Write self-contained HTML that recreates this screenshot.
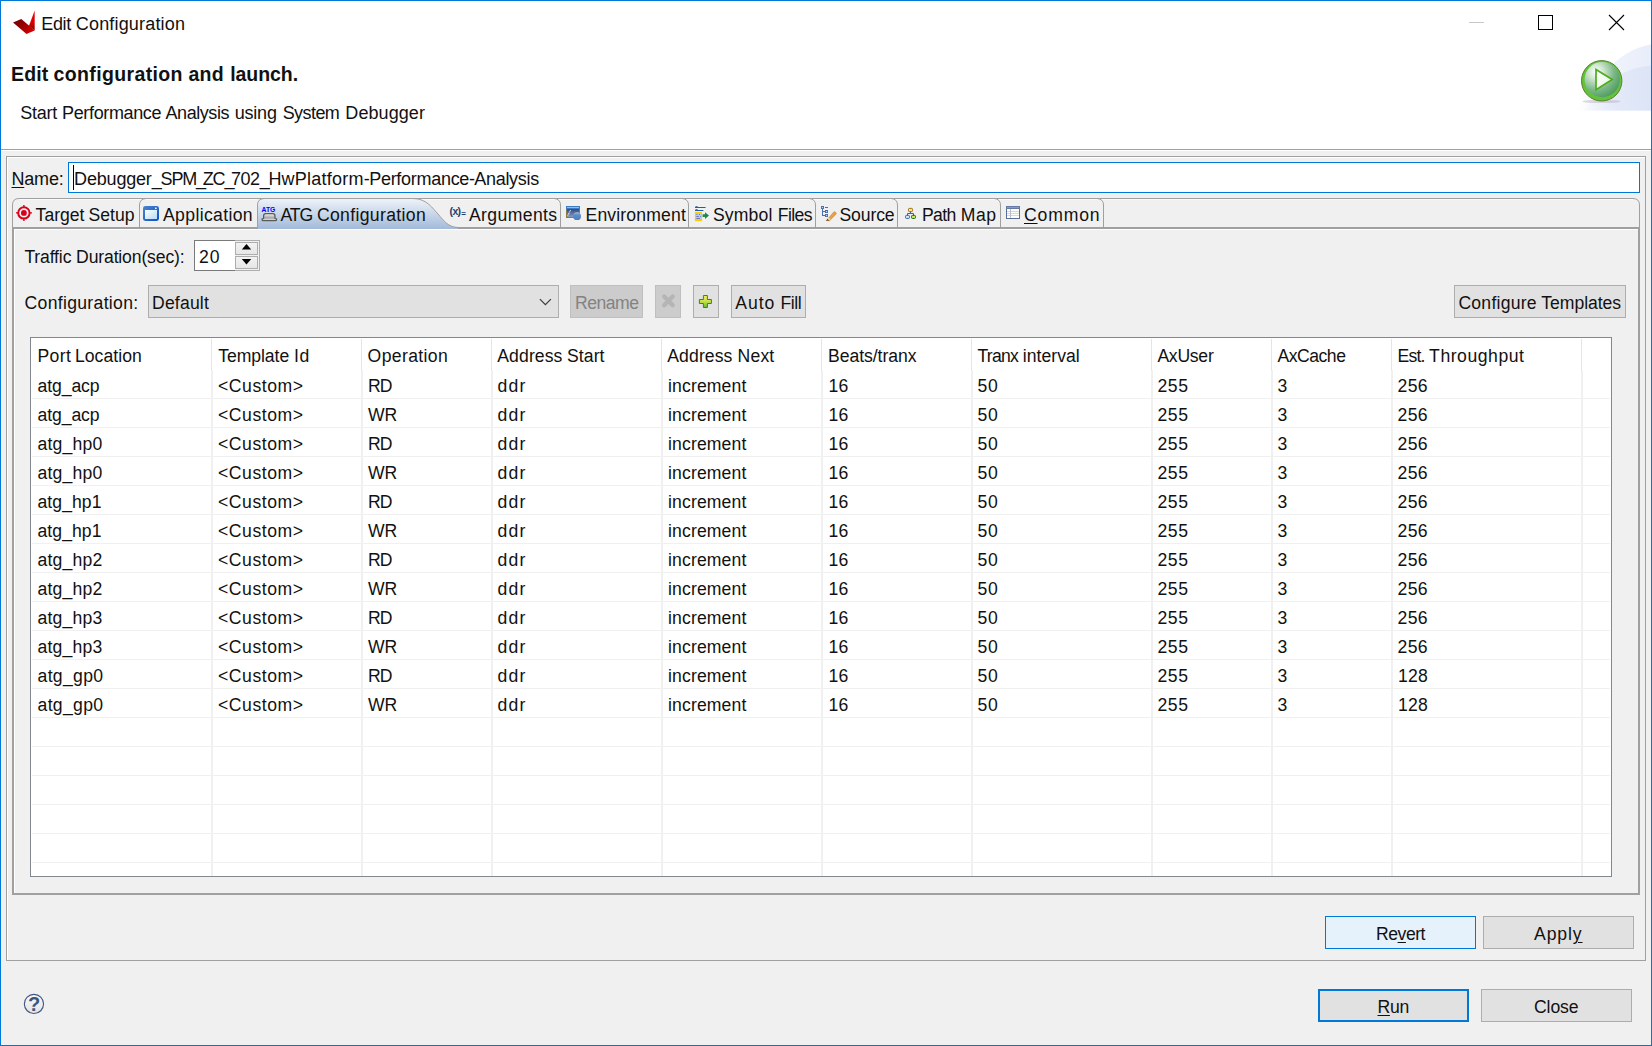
<!DOCTYPE html>
<html><head><meta charset="utf-8"><title>Edit Configuration</title>
<style>
html,body{margin:0;padding:0;}
body{width:1652px;height:1046px;position:relative;overflow:hidden;background:#f0f0f0;font-family:'Liberation Sans',sans-serif;font-size:17.6px;color:#111;}
.a{position:absolute;box-sizing:border-box;}
.t{position:absolute;white-space:pre;line-height:normal;}
u{text-decoration:underline;text-decoration-thickness:1px;text-underline-offset:2px;}
.btn{position:absolute;box-sizing:border-box;background:#e1e1e1;border:1px solid #adadad;}
.vl{position:absolute;width:1px;background:#edf2f9;}
.hl{position:absolute;height:1px;background:#f0f0f0;}
</style></head><body>
<!-- window frame -->
<div class="a" style="left:0;top:0;width:1652px;height:1046px;border:1px solid #0078d7;border-left-width:1px;"></div>
<!-- white header -->
<div class="a" style="left:1px;top:1px;width:1650px;height:148px;background:#fff;"></div>
<div class="a" style="left:1px;top:149px;width:1650px;height:1px;background:#a0a0a0;"></div>
<div class="a" style="left:1px;top:150px;width:1650px;height:1px;background:#fff;"></div>
<svg class="a" style="left:1560px;top:40px" width="91" height="75" viewBox="1560 40 91 75">
<defs>
<linearGradient id="bg1" gradientUnits="userSpaceOnUse" x1="1576" y1="0" x2="1651" y2="0"><stop offset="0" stop-color="#f0f3fc" stop-opacity="0"/><stop offset="0.45" stop-color="#eef2fc" stop-opacity="0.9"/><stop offset="1" stop-color="#e8edfa"/></linearGradient>
<linearGradient id="bg2" gradientUnits="userSpaceOnUse" x1="1580" y1="0" x2="1651" y2="0"><stop offset="0" stop-color="#e6ebf9" stop-opacity="0"/><stop offset="0.5" stop-color="#e2e8f8" stop-opacity="0.9"/><stop offset="1" stop-color="#dce4f6"/></linearGradient>
<radialGradient id="pg" gradientUnits="userSpaceOnUse" cx="1596" cy="72" r="30"><stop offset="0" stop-color="#ffffff"/><stop offset="0.25" stop-color="#cfe6cf"/><stop offset="0.6" stop-color="#7db887"/><stop offset="1" stop-color="#3f9254"/></radialGradient>
<linearGradient id="tri" x1="0" y1="0" x2="1" y2="1"><stop offset="0" stop-color="#fff"/><stop offset="1" stop-color="#e6f3e0"/></linearGradient>
</defs>
<path d="M1651 44.5 C1624 49 1600 70 1577 110.5 L1651 110.5 Z" fill="url(#bg1)"/>
<path d="M1651 66 C1628 67 1606 78 1584 110.5 L1651 110.5 Z" fill="url(#bg2)"/>
<ellipse cx="1601.5" cy="101.5" rx="19" ry="1.6" fill="#b9a9b9" opacity="0.45"/>
<circle cx="1601.7" cy="80.8" r="20.2" fill="#62c23c" stroke="#5f7d2e" stroke-width="1"/>
<circle cx="1602.2" cy="79.6" r="17.6" fill="url(#pg)"/>
<path d="M1596 69.6 L1612.2 79.5 L1596 89.6 Z" fill="url(#tri)" stroke="#4aae1c" stroke-width="1.7" stroke-linejoin="miter"/>
</svg>

<!-- outer group -->
<div class="a" style="left:6px;top:156px;width:1640px;height:805px;border:1px solid #a0a0a0;"></div>
<div class="a" style="left:7px;top:157px;width:1638px;height:803px;border:1px solid #fff;border-right:none;border-bottom:none;"></div>
<!-- name input -->
<div class="a" style="left:68px;top:162px;width:1572px;height:31px;background:#fff;border:1px solid #0078d7;"></div>
<div class="a" style="left:73px;top:165px;width:1px;height:25px;background:#000;"></div>
<!-- tab folder -->
<div class="a" style="left:12px;top:227px;width:1628px;height:668px;border:2px solid #a0a0a0;"></div>
<div class="a" style="left:14px;top:229px;width:1624px;height:664px;border-left:1px solid #fff;border-top:1px solid #fff;"></div>
<svg class="a" style="left:0;top:195px" width="1652" height="34" viewBox="0 195 1652 34">
<defs><linearGradient id="tg" x1="0" y1="0" x2="0" y2="1"><stop offset="0" stop-color="#edf2f9"/><stop offset="0.35" stop-color="#d3dfee"/><stop offset="1" stop-color="#a3bad9"/></linearGradient></defs>
<path d="M258 229 L258 205 Q258 199 264 199 L413 199 C427 199 433 209 438 214 C444 221 448 227 458 227.5 L458 229 Z" fill="url(#tg)"/>
<path d="M19 199.5 L257 199.5 M420 199.5 L1633 199.5" stroke="#fafafa" stroke-width="1" fill="none"/>
<g fill="none" stroke="#a0a0a0" stroke-width="1">
<path d="M12.5 227 L12.5 205 Q12.5 198.5 19 198.5 L1633 198.5 Q1639.5 198.5 1639.5 205 L1639.5 227"/>
<path d="M139.5 227 L139.5 205 Q139.5 199 146 198.5"/>
<path d="M257.5 227 L257.5 205 Q257.5 199 264 198.5"/>
<path d="M413 198.5 C427 198.5 433 209 438 214 C444 221 448 227 458 227.5"/>
<path d="M554 198.5 Q560.5 199 560.5 205 L560.5 227"/>
<path d="M682 198.5 Q688.5 199 688.5 205 L688.5 227"/>
<path d="M809 198.5 Q815.5 199 815.5 205 L815.5 227"/>
<path d="M891 198.5 Q897.5 199 897.5 205 L897.5 227"/>
<path d="M994 198.5 Q1000.5 199 1000.5 205 L1000.5 227"/>
<path d="M1097 198.5 Q1103.5 199 1103.5 205 L1103.5 227"/>
</g>
</svg>

<!-- spinner -->
<div class="a" style="left:194px;top:240px;width:66px;height:31px;background:#f0f0f0;border:1px solid #adadad;"></div>
<div class="a" style="left:194px;top:240px;width:41px;height:31px;background:#fff;border:1px solid #7a7a7a;border-right:none;"></div>
<div class="a" style="left:235px;top:242px;width:23px;height:13px;background:linear-gradient(#f2f2f2,#e6e6e6);border:1px solid #adadad;"></div>
<div class="a" style="left:235px;top:256px;width:23px;height:13px;background:linear-gradient(#f2f2f2,#e6e6e6);border:1px solid #adadad;"></div>
<svg class="a" style="left:241px;top:243px" width="11" height="7"><path d="M0.8 6.6 L5.5 0.9 L10.2 6.6Z" fill="#000"/></svg>
<svg class="a" style="left:241px;top:258px" width="11" height="7"><path d="M0.8 0.9 L5.5 6.4 L10.2 0.9Z" fill="#000"/></svg>
<!-- combo -->
<div class="btn" style="left:148px;top:285px;width:411px;height:33px;"></div>
<svg class="a" style="left:538px;top:297px" width="14" height="9"><path d="M1.9 2.1 L7.4 7.6 L12.9 2.1" fill="none" stroke="#3c3c3c" stroke-width="1.25"/></svg>
<!-- buttons row -->
<div class="btn" style="left:570px;top:285px;width:73px;height:33px;background:#ccc;border-color:#bfbfbf;"></div>
<div class="btn" style="left:655px;top:285px;width:26px;height:33px;background:#ccc;border-color:#bfbfbf;"></div>
<div class="btn" style="left:693px;top:285px;width:26px;height:33px;"></div>
<div class="btn" style="left:731px;top:285px;width:75px;height:33px;"></div>
<div class="btn" style="left:1454px;top:285px;width:172px;height:33px;"></div>
<!-- title icon -->
<svg class="a" style="left:10px;top:8px" width="28" height="28" viewBox="10 8 28 28">
<defs><linearGradient id="lw" gradientUnits="userSpaceOnUse" x1="17" y1="19" x2="31" y2="34"><stop offset="0" stop-color="#7a0000"/><stop offset="0.45" stop-color="#9a0000"/><stop offset="1" stop-color="#e00000"/></linearGradient>
<linearGradient id="rw" gradientUnits="userSpaceOnUse" x1="33" y1="11" x2="35" y2="31"><stop offset="0" stop-color="#f00000"/><stop offset="0.6" stop-color="#d80000"/><stop offset="1" stop-color="#7e0000"/></linearGradient></defs>
<path d="M13 22.4 L21.3 18.9 L34.7 30.6 L26.5 34 Z" fill="url(#lw)"/>
<path d="M28.9 26 L34.7 10.5 L34.7 30.6 Z" fill="url(#rw)"/>
</svg>
<!-- title buttons -->
<div class="a" style="left:1469px;top:22px;width:15px;height:1px;background:#c8c8c8;"></div>
<div class="a" style="left:1538px;top:15px;width:15px;height:15px;border:1px solid #000;"></div>
<svg class="a" style="left:1606px;top:12px" width="22" height="22" viewBox="1606 12 22 22"><path d="M1609 15 L1624 30 M1624 15 L1609 30" stroke="#000" stroke-width="1.1" fill="none"/></svg>
<!-- tab icons -->
<svg class="a" style="left:14px;top:203px" width="20" height="20" viewBox="14 203 20 20"><g fill="none" stroke="#d9001b"><circle cx="23.9" cy="212.9" r="5.7" stroke-width="2"/><path d="M16 212.9 L18.5 212.9 M29.3 212.9 L32 212.9 M23.9 205 L23.9 207.5 M23.9 218.3 L23.9 221" stroke-width="1.4"/></g><circle cx="23.9" cy="212.9" r="2.9" fill="#d9001b"/></svg>
<svg class="a" style="left:142px;top:205px" width="18" height="17" viewBox="142 205 18 17"><defs><linearGradient id="ag" x1="0" y1="0" x2="1" y2="1"><stop offset="0" stop-color="#4a86cc"/><stop offset="1" stop-color="#0f4fc6"/></linearGradient><linearGradient id="ag2" x1="0" y1="0" x2="1" y2="1"><stop offset="0" stop-color="#ffffff"/><stop offset="1" stop-color="#b4dcf5"/></linearGradient></defs><rect x="143" y="206" width="16" height="15" rx="2.4" fill="url(#ag)"/><rect x="145" y="210" width="12" height="9" fill="url(#ag2)"/><rect x="155" y="207.6" width="1.6" height="1.5" fill="#fff"/></svg>
<svg class="a" style="left:259px;top:204px" width="20" height="19" viewBox="259 204 20 19"><defs><linearGradient id="cg" x1="0" y1="0" x2="0" y2="1"><stop offset="0" stop-color="#f8f8f8"/><stop offset="0.6" stop-color="#a4a4a4"/><stop offset="0.8" stop-color="#c8c8c8"/><stop offset="1" stop-color="#f4f4f4"/></linearGradient></defs><text x="261.5" y="212" font-family="Liberation Sans,sans-serif" font-weight="700" font-size="7.2" fill="#0000ff" textLength="13.8" lengthAdjust="spacingAndGlyphs">ATG</text><path d="M263.6 218.5 L263.6 215.9 Q263.6 213.7 265.8 213.7 L272.8 213.7 Q275 213.7 275 215.9 L275 218.5 Q276.7 218.5 276.6 219.6 Q276.5 220.6 275.4 220.6 L263.2 220.6 Q262.1 220.6 262 219.6 Q261.9 218.5 263.6 218.5 Z" fill="url(#cg)" stroke="#5a5a5a" stroke-width="1.2" stroke-linejoin="round"/></svg>
<svg class="a" style="left:448px;top:204px" width="20" height="18" viewBox="448 204 20 18"><g font-family="Liberation Sans,sans-serif" font-weight="700" fill="#1f3f6e"><text x="449.5" y="215.4" font-size="10.5">(</text><text x="452.6" y="215" font-size="10.5">x</text><text x="457.6" y="215.4" font-size="10.5">)</text><text x="461.3" y="216" font-size="8">=</text></g></svg>
<svg class="a" style="left:565px;top:205px" width="18" height="17" viewBox="565 205 18 17"><defs><linearGradient id="eg" x1="0" y1="0" x2="0" y2="1"><stop offset="0" stop-color="#27447e"/><stop offset="1" stop-color="#8e9dc4"/></linearGradient><linearGradient id="eg2" x1="0" y1="0" x2="0" y2="1"><stop offset="0" stop-color="#9ec0e4"/><stop offset="0.35" stop-color="#5b8cc6"/><stop offset="1" stop-color="#4c7fba"/></linearGradient></defs><rect x="566.5" y="208.5" width="13" height="9" fill="url(#eg)" stroke="#8a7a40" stroke-width="1"/><rect x="566" y="206" width="14" height="3" fill="#3b7cc3"/><rect x="567" y="207" width="12" height="1" fill="#8cc0ec"/><path d="M567.8 215.6 L570.6 210" stroke="#fff" stroke-width="1" stroke-dasharray="1.2 0.6"/><circle cx="577.1" cy="216.2" r="3.9" fill="url(#eg2)"/></svg>
<svg class="a" style="left:693px;top:204px" width="18" height="19" viewBox="693 204 18 19"><path d="M695 207.5 L705.6 207.5 M695.6 207 L696.6 206 L697.4 207 M695 210.5 L703.4 210.5 M695.6 210 L696.6 209 L697.4 210" stroke="#1f5fa8" stroke-width="1" fill="none"/><rect x="695.5" y="212.5" width="6" height="8" fill="#a8d0ff" stroke="#ffcc00" stroke-width="1.2"/><path d="M696.4 214.5 h1 M699 214.5 h1 M696.4 216.5 h2.4 M700 216.5 h0.8 M696.4 218.5 h3.6" stroke="#6a5aa8" stroke-width="0.8"/><path d="M702.6 214.2 L705 214.2 L705 212.2 L709 215.6 L705 219 L705 217 L702.6 217 Z" fill="#1e8a4a"/></svg>
<svg class="a" style="left:820px;top:205px" width="18" height="18" viewBox="820 205 18 18"><g fill="#4a6fb0"><rect x="821" y="206" width="3" height="3"/><rect x="825" y="210" width="3" height="3"/><rect x="825" y="214" width="3" height="3"/><rect x="825" y="207" width="3" height="1"/><rect x="822" y="209" width="1" height="7"/><rect x="822" y="211" width="3" height="1"/><rect x="822" y="215" width="3" height="1"/></g><rect x="821.9" y="207" width="1.1" height="1.1" fill="#c8d6f0"/><rect x="826" y="211" width="1.1" height="1.1" fill="#c8d6f0"/><rect x="826" y="215" width="1.1" height="1.1" fill="#c8d6f0"/><path d="M827.6 219.6 L834.4 212 L836 213.4 L829.2 220.6 Z" fill="#f2ae58" stroke="#e09840" stroke-width="1.4" stroke-linejoin="round"/><path d="M825.9 220.9 L827.4 218.8 L829.4 220.4 Z" fill="#6a4020"/><path d="M827.4 218.8 L828.8 217.4 L830.6 219 L829.4 220.4 Z" fill="#ecd9a0"/></svg>
<svg class="a" style="left:904px;top:207px" width="14" height="13" viewBox="904 207 14 13"><path d="M910.5 212 L910.5 213.5 M907.5 215 L907.5 213.5 L913.5 213.5 L913.5 215" stroke="#3a5fb0" stroke-width="1" fill="none"/><rect x="908.5" y="208.4" width="4" height="3.2" rx="0.9" fill="#ffe680" stroke="#a06800" stroke-width="1"/><rect x="905.5" y="215.4" width="4" height="3" rx="0.9" fill="#cfeaf2" stroke="#3a5fa8" stroke-width="1"/><rect x="911.5" y="215.4" width="4" height="3" rx="0.9" fill="#d6e45a" stroke="#0a6a2a" stroke-width="1"/></svg>
<svg class="a" style="left:1005px;top:205px" width="16" height="15" viewBox="1005 205 16 15"><rect x="1006.5" y="206.5" width="13" height="12" fill="#fff" stroke="#5a6f95" stroke-width="1"/><rect x="1006" y="206" width="14" height="3" fill="#647aa2"/><rect x="1007" y="207" width="12" height="0.8" fill="#93a5c4"/><path d="M1007 211.5 h12 M1007 213.5 h12 M1007 215.5 h12" stroke="#d2d8e4" stroke-width="1"/><path d="M1010.5 209 v9" stroke="#b4bfd4" stroke-width="1"/></svg>
<!-- X and + -->
<svg class="a" style="left:660px;top:292px" width="18" height="18" viewBox="660 292 18 18"><path d="M664.2 296.6 L672.7 305.3 M672.7 296.6 L664.2 305.3" stroke="#b5b5b5" stroke-width="4.3" stroke-linecap="round" fill="none"/></svg>
<svg class="a" style="left:697px;top:293px" width="17" height="17" viewBox="697 293 17 17"><defs><linearGradient id="plg" x1="0" y1="0" x2="0" y2="1"><stop offset="0" stop-color="#f0ee58"/><stop offset="0.5" stop-color="#c4e04a"/><stop offset="1" stop-color="#62ba2e"/></linearGradient></defs><path d="M703.4 295.5 L707.4 295.5 L707.4 299.5 L711.4 299.5 L711.4 303.5 L707.4 303.5 L707.4 307.5 L703.4 307.5 L703.4 303.5 L699.4 303.5 L699.4 299.5 L703.4 299.5 Z" fill="url(#plg)" stroke="#3f8034" stroke-width="1"/></svg>

<!-- table -->
<div class="a" style="left:30px;top:337px;width:1582px;height:540px;background:#fff;border:1px solid #828790;"></div>
<div class="vl" style="left:211px;top:339px;height:31px;background:#e5e5e5"></div>
<div class="vl" style="left:211px;top:370px;height:506px;background:#e9f1fb"></div>
<div class="vl" style="left:212px;top:370px;height:506px;background:#f0f0f0"></div>
<div class="vl" style="left:361px;top:339px;height:31px;background:#e5e5e5"></div>
<div class="vl" style="left:361px;top:370px;height:506px;background:#e9f1fb"></div>
<div class="vl" style="left:362px;top:370px;height:506px;background:#f0f0f0"></div>
<div class="vl" style="left:491px;top:339px;height:31px;background:#e5e5e5"></div>
<div class="vl" style="left:491px;top:370px;height:506px;background:#e9f1fb"></div>
<div class="vl" style="left:492px;top:370px;height:506px;background:#f0f0f0"></div>
<div class="vl" style="left:661px;top:339px;height:31px;background:#e5e5e5"></div>
<div class="vl" style="left:661px;top:370px;height:506px;background:#e9f1fb"></div>
<div class="vl" style="left:662px;top:370px;height:506px;background:#f0f0f0"></div>
<div class="vl" style="left:821px;top:339px;height:31px;background:#e5e5e5"></div>
<div class="vl" style="left:821px;top:370px;height:506px;background:#e9f1fb"></div>
<div class="vl" style="left:822px;top:370px;height:506px;background:#f0f0f0"></div>
<div class="vl" style="left:971px;top:339px;height:31px;background:#e5e5e5"></div>
<div class="vl" style="left:971px;top:370px;height:506px;background:#e9f1fb"></div>
<div class="vl" style="left:972px;top:370px;height:506px;background:#f0f0f0"></div>
<div class="vl" style="left:1151px;top:339px;height:31px;background:#e5e5e5"></div>
<div class="vl" style="left:1151px;top:370px;height:506px;background:#e9f1fb"></div>
<div class="vl" style="left:1152px;top:370px;height:506px;background:#f0f0f0"></div>
<div class="vl" style="left:1271px;top:339px;height:31px;background:#e5e5e5"></div>
<div class="vl" style="left:1271px;top:370px;height:506px;background:#e9f1fb"></div>
<div class="vl" style="left:1272px;top:370px;height:506px;background:#f0f0f0"></div>
<div class="vl" style="left:1391px;top:339px;height:31px;background:#e5e5e5"></div>
<div class="vl" style="left:1391px;top:370px;height:506px;background:#e9f1fb"></div>
<div class="vl" style="left:1392px;top:370px;height:506px;background:#f0f0f0"></div>
<div class="vl" style="left:1581px;top:339px;height:31px;background:#e5e5e5"></div>
<div class="vl" style="left:1581px;top:370px;height:506px;background:#e9f1fb"></div>
<div class="vl" style="left:1582px;top:370px;height:506px;background:#f0f0f0"></div>
<div class="hl" style="left:32px;top:398px;width:1578px"></div>
<div class="hl" style="left:32px;top:427px;width:1578px"></div>
<div class="hl" style="left:32px;top:456px;width:1578px"></div>
<div class="hl" style="left:32px;top:485px;width:1578px"></div>
<div class="hl" style="left:32px;top:514px;width:1578px"></div>
<div class="hl" style="left:32px;top:543px;width:1578px"></div>
<div class="hl" style="left:32px;top:572px;width:1578px"></div>
<div class="hl" style="left:32px;top:601px;width:1578px"></div>
<div class="hl" style="left:32px;top:630px;width:1578px"></div>
<div class="hl" style="left:32px;top:659px;width:1578px"></div>
<div class="hl" style="left:32px;top:688px;width:1578px"></div>
<div class="hl" style="left:32px;top:717px;width:1578px"></div>
<div class="hl" style="left:32px;top:746px;width:1578px"></div>
<div class="hl" style="left:32px;top:775px;width:1578px"></div>
<div class="hl" style="left:32px;top:804px;width:1578px"></div>
<div class="hl" style="left:32px;top:833px;width:1578px"></div>
<div class="hl" style="left:32px;top:862px;width:1578px"></div>
<!-- bottom buttons -->
<div class="btn" style="left:1325px;top:916px;width:151px;height:33px;background:#e5f1fb;border-color:#0078d7;"></div>
<div class="btn" style="left:1483px;top:916px;width:151px;height:33px;"></div>
<div class="btn" style="left:1318px;top:989px;width:151px;height:33px;border:2px solid #0078d7;"></div>
<div class="btn" style="left:1481px;top:989px;width:151px;height:33px;"></div>
<!-- help -->
<svg class="a" style="left:22px;top:992px" width="24" height="24" viewBox="22 992 24 24"><defs><linearGradient id="hg" x1="0" y1="0" x2="0" y2="1"><stop offset="0" stop-color="#f8f8f8"/><stop offset="1" stop-color="#e4e4e4"/></linearGradient></defs><circle cx="33.95" cy="1003.95" r="9.6" fill="url(#hg)" stroke="#3f5682" stroke-width="1.1"/><text x="34" y="1011" text-anchor="middle" font-family="Liberation Sans,sans-serif" font-size="20" font-weight="700" fill="#3f5682">?</text></svg>
<span class="t" style="left:41.3px;top:13.7px;font-size:18px;letter-spacing:-0.358px">Edit </span>
<span class="t" style="left:75.8px;top:13.7px;font-size:18px;letter-spacing:0.171px">Configuration</span>
<span class="t" style="left:11.0px;top:62.9px;font-size:19.5px;font-weight:700;letter-spacing:0.139px">Edit </span>
<span class="t" style="left:53.6px;top:62.9px;font-size:19.5px;font-weight:700;letter-spacing:0.363px">configuration </span>
<span class="t" style="left:188.6px;top:62.9px;font-size:19.5px;font-weight:700;letter-spacing:0.143px">and </span>
<span class="t" style="left:230.2px;top:62.9px;font-size:19.5px;font-weight:700;letter-spacing:-0.067px">launch.</span>
<span class="t" style="left:20.3px;top:102.7px;font-size:18px;letter-spacing:-0.263px">Start </span>
<span class="t" style="left:62.1px;top:102.7px;font-size:18px;letter-spacing:-0.368px">Performance </span>
<span class="t" style="left:165.5px;top:102.7px;font-size:18px;letter-spacing:-0.441px">Analysis </span>
<span class="t" style="left:234.7px;top:102.7px;font-size:18px;letter-spacing:-0.206px">using </span>
<span class="t" style="left:282.7px;top:102.7px;font-size:18px;letter-spacing:-0.569px">System </span>
<span class="t" style="left:345.3px;top:102.7px;font-size:18px;letter-spacing:0.080px">Debugger</span>
<span class="t" style="left:11.5px;top:168.7px;font-size:18px;letter-spacing:-0.203px"><u>N</u>ame:</span>
<span class="t" style="left:74.1px;top:168.7px;font-size:18px;letter-spacing:-0.186px">Debugger_</span>
<span class="t" style="left:160.6px;top:168.7px;font-size:18px;letter-spacing:-1.200px">SPM_</span>
<span class="t" style="left:202.8px;top:168.7px;font-size:18px;letter-spacing:-1.200px">ZC_</span>
<span class="t" style="left:230.9px;top:168.7px;font-size:18px;letter-spacing:-0.412px">702_</span>
<span class="t" style="left:268.4px;top:168.7px;font-size:18px;letter-spacing:0.226px">HwPlatform-</span>
<span class="t" style="left:369.2px;top:168.7px;font-size:18px;letter-spacing:-0.287px">Performance-</span>
<span class="t" style="left:474.3px;top:168.7px;font-size:18px;letter-spacing:-0.304px">Analysis</span>
<span class="t" style="left:35.6px;top:205.1px;letter-spacing:-0.001px">Target </span>
<span class="t" style="left:88.5px;top:205.1px;letter-spacing:0.043px">Setup</span>
<span class="t" style="left:163.0px;top:205.1px;letter-spacing:0.357px">Application</span>
<span class="t" style="left:280.6px;top:205.1px;letter-spacing:-1.192px">ATG </span>
<span class="t" style="left:316.9px;top:205.1px;letter-spacing:0.350px">Configuration</span>
<span class="t" style="left:469.0px;top:205.1px;letter-spacing:0.380px">Arguments</span>
<span class="t" style="left:585.5px;top:205.1px;letter-spacing:0.156px">Environment</span>
<span class="t" style="left:712.9px;top:205.1px;letter-spacing:0.155px">Symbol </span>
<span class="t" style="left:777.8px;top:205.1px;letter-spacing:-0.591px">Files</span>
<span class="t" style="left:839.5px;top:205.1px;letter-spacing:-0.125px">Source</span>
<span class="t" style="left:922.0px;top:205.1px;letter-spacing:-0.676px">Path </span>
<span class="t" style="left:960.7px;top:205.1px;letter-spacing:0.622px">Map</span>
<span class="t" style="left:1024.0px;top:205.1px;letter-spacing:0.854px"><u>C</u>ommon</span>
<span class="t" style="left:24.4px;top:247.1px;letter-spacing:-0.144px">Traffic </span>
<span class="t" style="left:76.1px;top:247.1px;letter-spacing:-0.150px">Duration(sec):</span>
<span class="t" style="left:199.0px;top:247.1px;letter-spacing:0.961px">20</span>
<span class="t" style="left:24.5px;top:293.1px;letter-spacing:0.318px">Configuration:</span>
<span class="t" style="left:152.0px;top:293.1px;letter-spacing:0.179px">Default</span>
<span class="t" style="left:575.0px;top:293.1px;color:#838383;letter-spacing:-0.503px">Rename</span>
<span class="t" style="left:735.3px;top:293.1px;letter-spacing:0.924px">Auto </span>
<span class="t" style="left:780.5px;top:293.1px;letter-spacing:-0.471px">Fill</span>
<span class="t" style="left:1458.4px;top:293.1px;letter-spacing:0.245px">Configure </span>
<span class="t" style="left:1541.3px;top:293.1px;letter-spacing:-0.043px">Templates</span>
<span class="t" style="left:37.4px;top:346.1px;letter-spacing:0.430px">Port </span>
<span class="t" style="left:74.9px;top:346.1px;letter-spacing:0.071px">Location</span>
<span class="t" style="left:218.2px;top:346.1px;letter-spacing:-0.049px">Template </span>
<span class="t" style="left:294.1px;top:346.1px;letter-spacing:0.506px">Id</span>
<span class="t" style="left:367.6px;top:346.1px;letter-spacing:0.359px">Operation</span>
<span class="t" style="left:497.3px;top:346.1px;letter-spacing:0.093px">Address </span>
<span class="t" style="left:567.0px;top:346.1px;letter-spacing:0.089px">Start</span>
<span class="t" style="left:667.3px;top:346.1px;letter-spacing:0.093px">Address </span>
<span class="t" style="left:737.6px;top:346.1px;letter-spacing:0.153px">Next</span>
<span class="t" style="left:828.0px;top:346.1px;letter-spacing:-0.055px">Beats/tranx</span>
<span class="t" style="left:977.4px;top:346.1px;letter-spacing:-0.706px">Tranx </span>
<span class="t" style="left:1022.7px;top:346.1px;letter-spacing:0.048px">interval</span>
<span class="t" style="left:1157.4px;top:346.1px;letter-spacing:-0.265px">AxUser</span>
<span class="t" style="left:1277.4px;top:346.1px;letter-spacing:-0.470px">AxCache</span>
<span class="t" style="left:1397.6px;top:346.1px;letter-spacing:-0.853px">Est. </span>
<span class="t" style="left:1429.1px;top:346.1px;letter-spacing:0.540px">Throughput</span>
<span class="t" style="left:37.5px;top:376.1px;letter-spacing:-0.087px">atg_acp</span>
<span class="t" style="left:218.0px;top:376.1px;letter-spacing:0.541px">&lt;Custom&gt;</span>
<span class="t" style="left:368.0px;top:376.1px;letter-spacing:-0.961px">RD</span>
<span class="t" style="left:497.5px;top:376.1px;letter-spacing:1.188px">ddr</span>
<span class="t" style="left:668.0px;top:376.1px;letter-spacing:0.139px">increment</span>
<span class="t" style="left:828.5px;top:376.1px;letter-spacing:0.211px">16</span>
<span class="t" style="left:977.5px;top:376.1px;letter-spacing:0.711px">50</span>
<span class="t" style="left:1157.5px;top:376.1px;letter-spacing:0.547px">255</span>
<span class="t" style="left:1277.5px;top:376.1px;letter-spacing:0.703px">3</span>
<span class="t" style="left:1397.5px;top:376.1px;letter-spacing:0.380px">256</span>
<span class="t" style="left:37.5px;top:405.1px;letter-spacing:-0.087px">atg_acp</span>
<span class="t" style="left:218.0px;top:405.1px;letter-spacing:0.541px">&lt;Custom&gt;</span>
<span class="t" style="left:368.0px;top:405.1px;letter-spacing:-0.156px">WR</span>
<span class="t" style="left:497.5px;top:405.1px;letter-spacing:1.188px">ddr</span>
<span class="t" style="left:668.0px;top:405.1px;letter-spacing:0.139px">increment</span>
<span class="t" style="left:828.5px;top:405.1px;letter-spacing:0.211px">16</span>
<span class="t" style="left:977.5px;top:405.1px;letter-spacing:0.711px">50</span>
<span class="t" style="left:1157.5px;top:405.1px;letter-spacing:0.547px">255</span>
<span class="t" style="left:1277.5px;top:405.1px;letter-spacing:0.703px">3</span>
<span class="t" style="left:1397.5px;top:405.1px;letter-spacing:0.380px">256</span>
<span class="t" style="left:37.5px;top:434.1px;letter-spacing:0.199px">atg_hp0</span>
<span class="t" style="left:218.0px;top:434.1px;letter-spacing:0.541px">&lt;Custom&gt;</span>
<span class="t" style="left:368.0px;top:434.1px;letter-spacing:-0.961px">RD</span>
<span class="t" style="left:497.5px;top:434.1px;letter-spacing:1.188px">ddr</span>
<span class="t" style="left:668.0px;top:434.1px;letter-spacing:0.139px">increment</span>
<span class="t" style="left:828.5px;top:434.1px;letter-spacing:0.211px">16</span>
<span class="t" style="left:977.5px;top:434.1px;letter-spacing:0.711px">50</span>
<span class="t" style="left:1157.5px;top:434.1px;letter-spacing:0.547px">255</span>
<span class="t" style="left:1277.5px;top:434.1px;letter-spacing:0.703px">3</span>
<span class="t" style="left:1397.5px;top:434.1px;letter-spacing:0.380px">256</span>
<span class="t" style="left:37.5px;top:463.1px;letter-spacing:0.199px">atg_hp0</span>
<span class="t" style="left:218.0px;top:463.1px;letter-spacing:0.541px">&lt;Custom&gt;</span>
<span class="t" style="left:368.0px;top:463.1px;letter-spacing:-0.156px">WR</span>
<span class="t" style="left:497.5px;top:463.1px;letter-spacing:1.188px">ddr</span>
<span class="t" style="left:668.0px;top:463.1px;letter-spacing:0.139px">increment</span>
<span class="t" style="left:828.5px;top:463.1px;letter-spacing:0.211px">16</span>
<span class="t" style="left:977.5px;top:463.1px;letter-spacing:0.711px">50</span>
<span class="t" style="left:1157.5px;top:463.1px;letter-spacing:0.547px">255</span>
<span class="t" style="left:1277.5px;top:463.1px;letter-spacing:0.703px">3</span>
<span class="t" style="left:1397.5px;top:463.1px;letter-spacing:0.380px">256</span>
<span class="t" style="left:37.5px;top:492.1px;letter-spacing:0.056px">atg_hp1</span>
<span class="t" style="left:218.0px;top:492.1px;letter-spacing:0.541px">&lt;Custom&gt;</span>
<span class="t" style="left:368.0px;top:492.1px;letter-spacing:-0.961px">RD</span>
<span class="t" style="left:497.5px;top:492.1px;letter-spacing:1.188px">ddr</span>
<span class="t" style="left:668.0px;top:492.1px;letter-spacing:0.139px">increment</span>
<span class="t" style="left:828.5px;top:492.1px;letter-spacing:0.211px">16</span>
<span class="t" style="left:977.5px;top:492.1px;letter-spacing:0.711px">50</span>
<span class="t" style="left:1157.5px;top:492.1px;letter-spacing:0.547px">255</span>
<span class="t" style="left:1277.5px;top:492.1px;letter-spacing:0.703px">3</span>
<span class="t" style="left:1397.5px;top:492.1px;letter-spacing:0.380px">256</span>
<span class="t" style="left:37.5px;top:521.1px;letter-spacing:0.056px">atg_hp1</span>
<span class="t" style="left:218.0px;top:521.1px;letter-spacing:0.541px">&lt;Custom&gt;</span>
<span class="t" style="left:368.0px;top:521.1px;letter-spacing:-0.156px">WR</span>
<span class="t" style="left:497.5px;top:521.1px;letter-spacing:1.188px">ddr</span>
<span class="t" style="left:668.0px;top:521.1px;letter-spacing:0.139px">increment</span>
<span class="t" style="left:828.5px;top:521.1px;letter-spacing:0.211px">16</span>
<span class="t" style="left:977.5px;top:521.1px;letter-spacing:0.711px">50</span>
<span class="t" style="left:1157.5px;top:521.1px;letter-spacing:0.547px">255</span>
<span class="t" style="left:1277.5px;top:521.1px;letter-spacing:0.703px">3</span>
<span class="t" style="left:1397.5px;top:521.1px;letter-spacing:0.380px">256</span>
<span class="t" style="left:37.5px;top:550.1px;letter-spacing:0.199px">atg_hp2</span>
<span class="t" style="left:218.0px;top:550.1px;letter-spacing:0.541px">&lt;Custom&gt;</span>
<span class="t" style="left:368.0px;top:550.1px;letter-spacing:-0.961px">RD</span>
<span class="t" style="left:497.5px;top:550.1px;letter-spacing:1.188px">ddr</span>
<span class="t" style="left:668.0px;top:550.1px;letter-spacing:0.139px">increment</span>
<span class="t" style="left:828.5px;top:550.1px;letter-spacing:0.211px">16</span>
<span class="t" style="left:977.5px;top:550.1px;letter-spacing:0.711px">50</span>
<span class="t" style="left:1157.5px;top:550.1px;letter-spacing:0.547px">255</span>
<span class="t" style="left:1277.5px;top:550.1px;letter-spacing:0.703px">3</span>
<span class="t" style="left:1397.5px;top:550.1px;letter-spacing:0.380px">256</span>
<span class="t" style="left:37.5px;top:579.1px;letter-spacing:0.199px">atg_hp2</span>
<span class="t" style="left:218.0px;top:579.1px;letter-spacing:0.541px">&lt;Custom&gt;</span>
<span class="t" style="left:368.0px;top:579.1px;letter-spacing:-0.156px">WR</span>
<span class="t" style="left:497.5px;top:579.1px;letter-spacing:1.188px">ddr</span>
<span class="t" style="left:668.0px;top:579.1px;letter-spacing:0.139px">increment</span>
<span class="t" style="left:828.5px;top:579.1px;letter-spacing:0.211px">16</span>
<span class="t" style="left:977.5px;top:579.1px;letter-spacing:0.711px">50</span>
<span class="t" style="left:1157.5px;top:579.1px;letter-spacing:0.547px">255</span>
<span class="t" style="left:1277.5px;top:579.1px;letter-spacing:0.703px">3</span>
<span class="t" style="left:1397.5px;top:579.1px;letter-spacing:0.380px">256</span>
<span class="t" style="left:37.5px;top:608.1px;letter-spacing:0.199px">atg_hp3</span>
<span class="t" style="left:218.0px;top:608.1px;letter-spacing:0.541px">&lt;Custom&gt;</span>
<span class="t" style="left:368.0px;top:608.1px;letter-spacing:-0.961px">RD</span>
<span class="t" style="left:497.5px;top:608.1px;letter-spacing:1.188px">ddr</span>
<span class="t" style="left:668.0px;top:608.1px;letter-spacing:0.139px">increment</span>
<span class="t" style="left:828.5px;top:608.1px;letter-spacing:0.211px">16</span>
<span class="t" style="left:977.5px;top:608.1px;letter-spacing:0.711px">50</span>
<span class="t" style="left:1157.5px;top:608.1px;letter-spacing:0.547px">255</span>
<span class="t" style="left:1277.5px;top:608.1px;letter-spacing:0.703px">3</span>
<span class="t" style="left:1397.5px;top:608.1px;letter-spacing:0.380px">256</span>
<span class="t" style="left:37.5px;top:637.1px;letter-spacing:0.199px">atg_hp3</span>
<span class="t" style="left:218.0px;top:637.1px;letter-spacing:0.541px">&lt;Custom&gt;</span>
<span class="t" style="left:368.0px;top:637.1px;letter-spacing:-0.156px">WR</span>
<span class="t" style="left:497.5px;top:637.1px;letter-spacing:1.188px">ddr</span>
<span class="t" style="left:668.0px;top:637.1px;letter-spacing:0.139px">increment</span>
<span class="t" style="left:828.5px;top:637.1px;letter-spacing:0.211px">16</span>
<span class="t" style="left:977.5px;top:637.1px;letter-spacing:0.711px">50</span>
<span class="t" style="left:1157.5px;top:637.1px;letter-spacing:0.547px">255</span>
<span class="t" style="left:1277.5px;top:637.1px;letter-spacing:0.703px">3</span>
<span class="t" style="left:1397.5px;top:637.1px;letter-spacing:0.380px">256</span>
<span class="t" style="left:37.5px;top:666.1px;letter-spacing:0.342px">atg_gp0</span>
<span class="t" style="left:218.0px;top:666.1px;letter-spacing:0.541px">&lt;Custom&gt;</span>
<span class="t" style="left:368.0px;top:666.1px;letter-spacing:-0.961px">RD</span>
<span class="t" style="left:497.5px;top:666.1px;letter-spacing:1.188px">ddr</span>
<span class="t" style="left:668.0px;top:666.1px;letter-spacing:0.139px">increment</span>
<span class="t" style="left:828.5px;top:666.1px;letter-spacing:0.211px">16</span>
<span class="t" style="left:977.5px;top:666.1px;letter-spacing:0.711px">50</span>
<span class="t" style="left:1157.5px;top:666.1px;letter-spacing:0.547px">255</span>
<span class="t" style="left:1277.5px;top:666.1px;letter-spacing:0.703px">3</span>
<span class="t" style="left:1398.0px;top:666.1px;letter-spacing:0.214px">128</span>
<span class="t" style="left:37.5px;top:695.1px;letter-spacing:0.342px">atg_gp0</span>
<span class="t" style="left:218.0px;top:695.1px;letter-spacing:0.541px">&lt;Custom&gt;</span>
<span class="t" style="left:368.0px;top:695.1px;letter-spacing:-0.156px">WR</span>
<span class="t" style="left:497.5px;top:695.1px;letter-spacing:1.188px">ddr</span>
<span class="t" style="left:668.0px;top:695.1px;letter-spacing:0.139px">increment</span>
<span class="t" style="left:828.5px;top:695.1px;letter-spacing:0.211px">16</span>
<span class="t" style="left:977.5px;top:695.1px;letter-spacing:0.711px">50</span>
<span class="t" style="left:1157.5px;top:695.1px;letter-spacing:0.547px">255</span>
<span class="t" style="left:1277.5px;top:695.1px;letter-spacing:0.703px">3</span>
<span class="t" style="left:1398.0px;top:695.1px;letter-spacing:0.214px">128</span>
<span class="t" style="left:1376.0px;top:924.1px;letter-spacing:-0.471px">Re<u>v</u>ert</span>
<span class="t" style="left:1534.0px;top:924.1px;letter-spacing:0.897px">Appl<u>y</u></span>
<span class="t" style="left:1377.5px;top:997.1px;letter-spacing:-0.260px"><u>R</u>un</span>
<span class="t" style="left:1534.0px;top:997.1px;letter-spacing:-0.097px">Close</span>
</body></html>
